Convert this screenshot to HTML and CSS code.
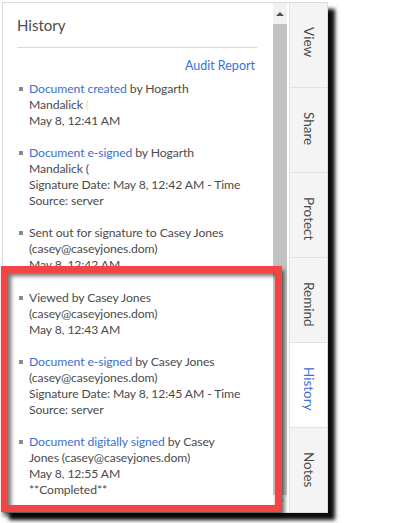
FILE: index.html
```
<!DOCTYPE html>
<html lang="en">
<head>
<meta charset="utf-8">
<title>History</title>
<link rel="stylesheet" href="styles.css">
</head>
<body>
<div class="frame">
  <section class="panel">
    <h2 class="title">History</h2>
    <div class="rule"></div>
    <div class="audit"><a href="#">Audit Report</a></div>
    <ul class="events">
      <li><div><a href="#">Document created</a> by Hogarth<br>Mandalick <span class="faint">(</span><br>May 8, 12:41 AM</div></li>
      <li><div><a href="#">Document e-signed</a> by Hogarth<br>Mandalick (<br>Signature Date: May 8, 12:42 AM - Time<br>Source: server</div></li>
      <li><div>Sent out for signature to Casey Jones<br>(casey@caseyjones.dom)<br>May 8, 12:42 AM</div></li>
      <li><div>Viewed by Casey Jones<br>(casey@caseyjones.dom)<br>May 8, 12:43 AM</div></li>
      <li><div><a href="#">Document e-signed</a> by Casey Jones<br>(casey@caseyjones.dom)<br>Signature Date: May 8, 12:45 AM - Time<br>Source: server</div></li>
      <li><div><a href="#">Document digitally signed</a> by Casey<br>Jones (casey@caseyjones.dom)<br>May 8, 12:55 AM<br>**Completed**</div></li>
    </ul>
  </section>
  <div class="scrollbar">
    <span class="arrow up"></span>
    <span class="thumb"></span>
    <span class="arrow down"></span>
  </div>
  <nav class="tabs">
    <div class="tab"><span>View</span></div>
    <div class="tab"><span>Share</span></div>
    <div class="tab"><span>Protect</span></div>
    <div class="tab"><span>Remind</span></div>
    <div class="tab active"><span>History</span></div>
    <div class="tab"><span>Notes</span></div>
  </nav>
</div>
<div class="callout"></div>
</body>
</html>
```
FILE: styles.css
```
html, body {
  margin: 0;
  padding: 0;
  background: #fff;
}
body {
  font-family: Lato, "Open Sans", sans-serif;
  color: #4b4b4b;
  position: relative;
  width: 400px;
  height: 523px;
  overflow: hidden;
}
.frame {
  margin: 2px 0 0 2px;
  width: 324px;
  height: 509px;
  border: 1px solid #dcdcdc;
  display: flex;
  background: #fff;
  box-shadow: 7px 7px 4px rgba(0, 0, 0, 0.95);
}
.panel {
  width: 270px;
  flex: none;
  overflow: hidden;
  box-sizing: border-box;
  padding: 12px 16px 0 14px;
}
.title {
  margin: 0;
  font-size: 15px;
  font-weight: 400;
  line-height: 20px;
  color: #4b4b4b;
}
.rule {
  height: 1px;
  background: #dadada;
  margin-top: 12px;
}
.audit {
  margin-top: 10px;
  text-align: right;
  font-size: 12.5px;
  line-height: 16px;
  padding-right: 2px;
}
a {
  color: #3a6fd4;
  text-decoration: none;
}
.events {
  list-style: none;
  margin: 7px 0 0;
  padding: 0;
  font-size: 12.2px;
  letter-spacing: -0.1px;
  line-height: 16px;
}
.events li {
  display: grid;
  grid-template-columns: 12px 1fr;
  margin-bottom: 16.2px;
  white-space: nowrap;
}
.events li::before {
  content: "";
  width: 4px;
  height: 4px;
  background: #8a8a8a;
  margin: 6px 0 0 2px;
}
.faint {
  color: #f3d7a8;
}
.scrollbar {
  width: 14px;
  flex: none;
  background: #f1f1f1;
  display: flex;
  flex-direction: column;
  align-items: center;
  margin-right: 2px;
}
.arrow {
  width: 0;
  height: 0;
  border-left: 4px solid transparent;
  border-right: 4px solid transparent;
  margin: 9px 0 8px;
}
.arrow.up {
  border-bottom: 4px solid #505050;
}
.arrow.down {
  border-top: 4px solid #a3a3a3;
  margin: 5px 0 8px;
}
.thumb {
  flex: 1;
  width: 14px;
  background: #c1c1c1;
}
.tabs {
  width: 37px;
  flex: none;
  background: #f4f4f4;
  border-left: 1px solid #e2e2e2;
  display: flex;
  flex-direction: column;
}
.tab {
  flex: 1;
  border-bottom: 1px solid #e2e2e2;
  display: flex;
  justify-content: center;
  padding-top: 24px;
  box-sizing: border-box;
}
.tab:last-child {
  border-bottom: none;
}
.tab span {
  writing-mode: vertical-rl;
  font-size: 13.5px;
  color: #4b4b4b;
  line-height: 16px;
}
.tab.active {
  background: #fff;
}
.tab.active span {
  color: #3a6fd4;
}
.callout {
  position: absolute;
  left: 1px;
  top: 266px;
  width: 281px;
  height: 246px;
  box-sizing: border-box;
  border: 7px solid #f44343;
  box-shadow: inset 3px 3px 4px rgba(0, 0, 0, 0.55), 2px 4px 4px rgba(0, 0, 0, 0.6);
}
```
